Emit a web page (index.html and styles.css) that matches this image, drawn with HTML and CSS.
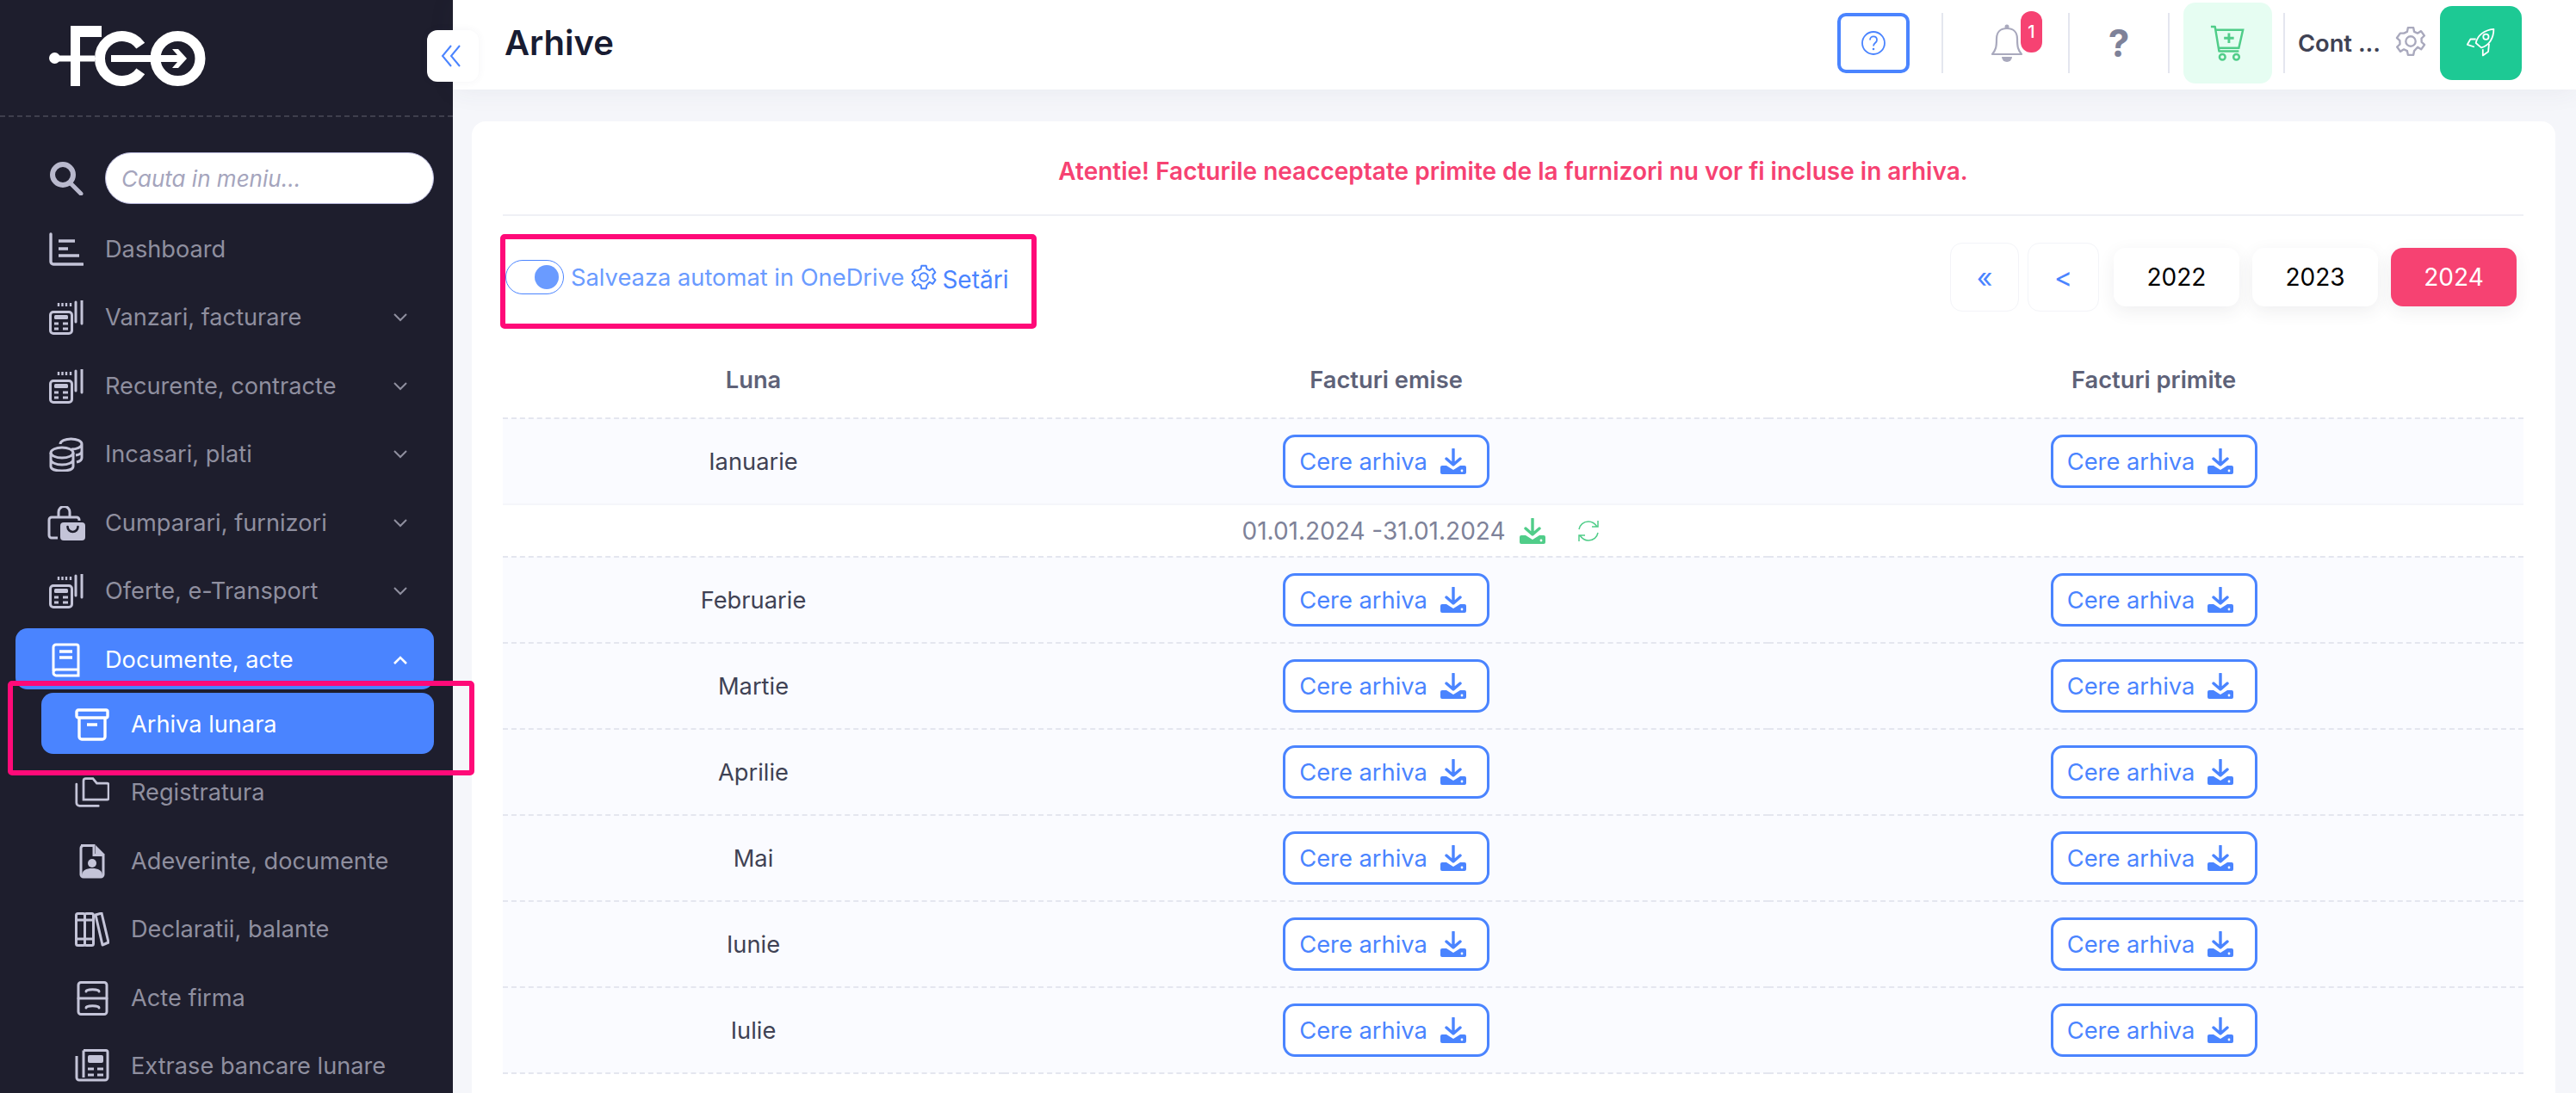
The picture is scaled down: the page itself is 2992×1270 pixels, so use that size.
FILE: index.html
```html
<!DOCTYPE html>
<html lang="ro">
<head>
<meta charset="utf-8">
<title>Arhive</title>
<link rel="stylesheet" href="styles.css">
</head>
<body>
<svg class="defs" width="0" height="0" aria-hidden="true">
  <symbol id="i-calc" viewBox="0 0 40 40">
    <rect x="1.5" y="13.5" width="25" height="25" rx="3.5" fill="none" stroke="currentColor" stroke-width="3"/>
    <rect x="6" y="17" width="16" height="5" rx="1.5" fill="currentColor"/>
    <path d="M6 27h5M16 27h6M6 33h5M16 33h6" stroke="currentColor" stroke-width="3"/>
    <path d="M11 3v4M15.5 3v4M20 3v4M25 3v4" stroke="currentColor" stroke-width="2.4"/>
    <path d="M31 2v23M38 0v27" stroke="currentColor" stroke-width="3" stroke-linecap="round"/>
  </symbol>
  <symbol id="i-down" viewBox="0 0 30 30">
    <path d="M15 1v17M7 12l8 7 8-7" fill="none" stroke="currentColor" stroke-width="3.4" stroke-linecap="round" stroke-linejoin="round"/>
    <path d="M2 20h5l8 5 8-5h5a2 2 0 0 1 2 2v6a2 2 0 0 1-2 2H2a2 2 0 0 1-2-2v-6a2 2 0 0 1 2-2z" fill="currentColor"/>
    <circle cx="25" cy="26" r="1.4" fill="#fff"/>
  </symbol>
  <symbol id="i-gear" viewBox="0 0 24 24">
    <circle cx="12" cy="12" r="3.6" fill="none" stroke="currentColor" stroke-width="1.5"/>
    <path d="M10 2h4l.6 3 2.4 1.1 2.6-1.6 2.4 3.4-2.1 2 .1 2.6 2.1 2-2.4 3.4-2.6-1.6L14.6 19 14 22h-4l-.6-3-2.4-1.1-2.6 1.6-2.4-3.4 2.1-2-.1-2.6-2.1-2 2.4-3.4L7 6.1 9.4 5z" fill="none" stroke="currentColor" stroke-width="1.5" stroke-linejoin="round"/>
  </symbol>
</svg>

<div class="app">
  <aside class="sidebar">
    <div class="brand">
      <svg class="logo" viewBox="0 0 182 70" aria-label="FGO">
        <path d="M25 0h36v13H36v57H25z" fill="#fff"/>
        <path d="M106.300 23.100A26 26 0 1 0 106.300 52.900" fill="none" stroke="#fff" stroke-width="12"/>
        <circle cx="149.500" cy="38" r="26" fill="none" stroke="#fff" stroke-width="12"/>
        <circle cx="6.500" cy="37.500" r="6.500" fill="#fff"/>
        <path d="M7 34.500h46v7H7z" fill="#fff"/>
        <path d="M72 34h77l-6-7h7l10 11-10 11h-7l6-7H72z" fill="#fff"/>
      </svg>
    </div>
    <div class="search">
      <svg class="nav-icon" viewBox="0 0 40 40"><circle cx="16" cy="16" r="12" fill="none" stroke="currentColor" stroke-width="6"/><path d="M25 26l12 12" stroke="currentColor" stroke-width="5" stroke-linecap="round"/></svg>
      <input class="search-input" type="text" placeholder="Cauta in meniu...">
    </div>
    <nav class="nav">
      <a class="nav-item">
        <svg class="nav-icon" viewBox="0 0 40 40"><path d="M2 2v32a3 3 0 0 0 3 3h34" fill="none" stroke="currentColor" stroke-width="3.400" stroke-linecap="round"/><path d="M11 10h19M11 19h11M11 27h24" stroke="currentColor" stroke-width="3.400"/></svg>
        <span class="nav-label">Dashboard</span>
      </a>
      <a class="nav-item">
        <svg class="nav-icon"><use href="#i-calc"/></svg>
        <span class="nav-label">Vanzari, facturare</span>
        <svg class="chev" viewBox="0 0 16 10"><path d="M1 1l7 7 7-7" fill="none" stroke="currentColor" stroke-width="2"/></svg>
      </a>
      <a class="nav-item">
        <svg class="nav-icon"><use href="#i-calc"/></svg>
        <span class="nav-label">Recurente, contracte</span>
        <svg class="chev" viewBox="0 0 16 10"><path d="M1 1l7 7 7-7" fill="none" stroke="currentColor" stroke-width="2"/></svg>
      </a>
      <a class="nav-item">
        <svg class="nav-icon" viewBox="0 0 40 40" fill="none" stroke="currentColor" stroke-width="3"><ellipse cx="15" cy="18" rx="13" ry="6"/><path d="M2 18v16c0 3.300 5.800 5 13 5s13-1.700 13-5V18M2 26c0 3.300 5.800 6 13 6s13-2.700 13-6"/><path d="M13 8c0-3.500 5.800-6 12.500-6S38 4.500 38 8v16c0 2-2 4-6 5M26 14c6 0 12-2.500 12-6M31 21c4-.7 7-2.500 7-5"/></svg>
        <span class="nav-label">Incasari, plati</span>
        <svg class="chev" viewBox="0 0 16 10"><path d="M1 1l7 7 7-7" fill="none" stroke="currentColor" stroke-width="2"/></svg>
      </a>
      <a class="nav-item">
        <svg class="nav-icon icon-wide" viewBox="0 0 44 40"><path d="M13 13V7a6.500 6.500 0 0 1 13 0v6" fill="none" stroke="currentColor" stroke-width="3"/><path d="M12 37H5a3 3 0 0 1-3-3V16a3 3 0 0 1 3-3h29a3 3 0 0 1 3 3v1" fill="none" stroke="currentColor" stroke-width="3"/><rect x="15" y="19" width="29" height="21" rx="4" fill="currentColor"/><path d="M23.500 24a6 6 0 0 0 12 0" fill="none" stroke="#1e1e2d" stroke-width="2.600" stroke-linecap="round"/></svg>
        <span class="nav-label">Cumparari, furnizori</span>
        <svg class="chev" viewBox="0 0 16 10"><path d="M1 1l7 7 7-7" fill="none" stroke="currentColor" stroke-width="2"/></svg>
      </a>
      <a class="nav-item">
        <svg class="nav-icon"><use href="#i-calc"/></svg>
        <span class="nav-label">Oferte, e-Transport</span>
        <svg class="chev" viewBox="0 0 16 10"><path d="M1 1l7 7 7-7" fill="none" stroke="currentColor" stroke-width="2"/></svg>
      </a>
      <a class="nav-item is-active">
        <svg class="nav-icon" viewBox="0 0 40 40" fill="none" stroke="currentColor" stroke-width="3"><path d="M5 33V5a3 3 0 0 1 3-3h24a2 2 0 0 1 2 2v27H8a3.500 3.500 0 0 0-3 3.500A3.500 3.500 0 0 0 8 38h26v-7"/><path d="M12 10h15M12 17h15" stroke-width="3.400"/></svg>
        <span class="nav-label">Documente, acte</span>
        <svg class="chev" viewBox="0 0 16 10"><path d="M1 9l7-7 7 7" fill="none" stroke="currentColor" stroke-width="2.600"/></svg>
      </a>
      <div class="subnav">
        <a class="nav-item sub is-active">
          <svg class="nav-icon" viewBox="0 0 40 40" fill="none" stroke="currentColor" stroke-width="3.400"><rect x="2" y="3" width="36" height="9" rx="2"/><path d="M5 12v22a3 3 0 0 0 3 3h24a3 3 0 0 0 3-3V12M14 20h12"/></svg>
          <span class="nav-label">Arhiva lunara</span>
        </a>
        <a class="nav-item sub">
          <svg class="nav-icon" viewBox="0 0 44 40" fill="none" stroke="currentColor" stroke-width="3"><path d="M11 29V5a3 3 0 0 1 3-3h9l5 6h13a2 2 0 0 1 2 2v17a2 2 0 0 1-2 2z"/><path d="M2 9v24a4 4 0 0 0 4 4h24" stroke-linecap="round"/></svg>
          <span class="nav-label">Registratura</span>
        </a>
        <a class="nav-item sub">
          <svg class="nav-icon" viewBox="0 0 40 40"><path d="M7 1.500h15v11h11V35a3 3 0 0 1-3 3H10a3 3 0 0 1-3-3V4.500a3 3 0 0 1 3-3z" fill="none" stroke="currentColor" stroke-width="3"/><path d="M24 1l10 10H24z" fill="currentColor"/><circle cx="20" cy="22" r="5" fill="currentColor"/><path d="M8 37c0-7 5-9 12-9s12 2 12 9z" fill="currentColor"/></svg>
          <span class="nav-label">Adeverinte, documente</span>
        </a>
        <a class="nav-item sub">
          <svg class="nav-icon" viewBox="0 0 40 40" fill="none" stroke="currentColor" stroke-width="3"><rect x="1.500" y="1.500" width="10" height="37" rx="2"/><rect x="11.500" y="1.500" width="10" height="37" rx="2"/><path d="M2 9h19M2 31h19"/><path d="M24 3l7-2 8 34-7 3z" stroke-linejoin="round"/></svg>
          <span class="nav-label">Declaratii, balante</span>
        </a>
        <a class="nav-item sub">
          <svg class="nav-icon" viewBox="0 0 40 40" fill="none" stroke="currentColor" stroke-width="3"><rect x="4" y="1.500" width="33" height="37" rx="3"/><path d="M4 20h33M13 12c0-3 15-3 15 0M13 31c0-3 15-3 15 0" stroke-linecap="round"/></svg>
          <span class="nav-label">Acte firma</span>
        </a>
        <a class="nav-item sub">
          <svg class="nav-icon" viewBox="0 0 40 40" fill="none" stroke="currentColor" stroke-width="3"><path d="M10 1.500h26a2 2 0 0 1 2 2V33a3 3 0 0 1-3 3H5a3 3 0 0 1-3-3V8"/><path d="M10 1.500V33"/><rect x="15" y="7" width="18" height="9" rx="2" fill="currentColor" stroke="none"/><path d="M15 23h7M26 23h7M15 30h7M26 30h7"/></svg>
          <span class="nav-label">Extrase bancare lunare</span>
        </a>
      </div>
    </nav>
  </aside>

  <main class="main">
    <header class="topbar">
      <h1 class="title">Arhive</h1>
      <div class="tools">
        <button class="help-btn" type="button">
          <svg viewBox="0 0 30 30" class="help-icon"><circle cx="15" cy="15" r="13" fill="none" stroke="currentColor" stroke-width="1.800"/><path d="M11 11.500c0-5.500 8-5.500 8 0 0 3.500-4 3-4 7" fill="none" stroke="currentColor" stroke-width="1.800"/><circle cx="15" cy="22" r="1.300" fill="currentColor"/></svg>
        </button>
        <span class="sep sep-1"></span>
        <span class="bell">
          <svg viewBox="0 0 38 46" class="bell-icon"><path d="M2 36c4-5 5-8 5-18C7 10 12 6 19 6s12 4 12 12c0 10 1 13 5 18z" fill="none" stroke="#a9a9bd" stroke-width="2.200" stroke-linejoin="round"/><circle cx="19" cy="4" r="2.500" fill="#a9a9bd"/><path d="M13 39h12a6 6 0 0 1-12 0z" fill="#a9a9bd"/></svg>
          <span class="badge">1</span>
        </span>
        <span class="sep"></span>
        <span class="question">?</span>
        <span class="sep"></span>
        <span class="cart">
          <svg viewBox="0 0 44 44" class="cart-icon" fill="none" stroke="#50cd89" stroke-width="2.600"><path d="M2 2h5l5 30h24" stroke-linejoin="round"/><path d="M8 6h33l-5 22H12"/><circle cx="16" cy="39" r="3.500"/><circle cx="33" cy="39" r="3.500"/><path d="M24 10v12M18 16h12" stroke-width="3"/></svg>
        </span>
        <span class="sep sep-4"></span>
        <span class="account">Cont ...</span>
        <svg class="acc-gear"><use href="#i-gear"/></svg>
        <button class="rocket" type="button">
          <svg viewBox="0 0 40 40" class="rocket-icon" fill="none" stroke="#fff" stroke-width="2" stroke-linejoin="round"><path d="M13 20C15 10 24 3 36 2c0 12-6 21-16 24z"/><circle cx="26" cy="12" r="3.500"/><path d="M13 15H6l-4 7 9 3M22 28v8l7-5 1-10"/></svg>
        </button>
      </div>
    </header>

    <section class="card">
      <p class="notice">Atentie! Facturile neacceptate primite de la furnizori nu vor fi incluse in arhiva.</p>
      <div class="toolbar">
        <div class="auto-save">
          <span class="switch"><span class="knob"></span></span>
          <span class="auto-label">Salveaza automat in OneDrive</span>
          <svg class="set-gear"><use href="#i-gear"/></svg>
          <span class="set-label">Setări</span>
        </div>
        <div class="pager">
          <a class="page-arrow first">«</a>
          <a class="page-arrow prev">&lt;</a>
          <a class="page-year">2022</a>
          <a class="page-year">2023</a>
          <a class="page-year is-current">2024</a>
        </div>
      </div>
      <table class="archive">
        <thead>
          <tr><th class="c-month">Luna</th><th class="c-out">Facturi emise</th><th class="c-in">Facturi primite</th></tr>
        </thead>
        <tbody>
          <tr class="month"><td>Ianuarie</td>
            <td><a class="req">Cere arhiva <svg class="req-icon"><use href="#i-down"/></svg></a></td>
            <td class="c-in"><a class="req">Cere arhiva <svg class="req-icon"><use href="#i-down"/></svg></a></td></tr>
          <tr class="range"><td colspan="3"><div class="range-inner"><span>01.01.2024 -31.01.2024</span>
            <svg class="range-down"><use href="#i-down"/></svg>
            <svg class="range-sync" viewBox="0 0 26 26" fill="none" stroke="#50cd89" stroke-width="1.500"><path d="M2 11C3 6 7 2 13 2c5 0 8 3 10 6M24 1v7h-7M24 15c-1 5-5 9-11 9-5 0-8-3-10-6M2 25v-7h7"/></svg></div></td></tr>
          <tr class="month"><td>Februarie</td>
            <td><a class="req">Cere arhiva <svg class="req-icon"><use href="#i-down"/></svg></a></td>
            <td class="c-in"><a class="req">Cere arhiva <svg class="req-icon"><use href="#i-down"/></svg></a></td></tr>
          <tr class="month"><td>Martie</td>
            <td><a class="req">Cere arhiva <svg class="req-icon"><use href="#i-down"/></svg></a></td>
            <td class="c-in"><a class="req">Cere arhiva <svg class="req-icon"><use href="#i-down"/></svg></a></td></tr>
          <tr class="month"><td>Aprilie</td>
            <td><a class="req">Cere arhiva <svg class="req-icon"><use href="#i-down"/></svg></a></td>
            <td class="c-in"><a class="req">Cere arhiva <svg class="req-icon"><use href="#i-down"/></svg></a></td></tr>
          <tr class="month"><td>Mai</td>
            <td><a class="req">Cere arhiva <svg class="req-icon"><use href="#i-down"/></svg></a></td>
            <td class="c-in"><a class="req">Cere arhiva <svg class="req-icon"><use href="#i-down"/></svg></a></td></tr>
          <tr class="month"><td>Iunie</td>
            <td><a class="req">Cere arhiva <svg class="req-icon"><use href="#i-down"/></svg></a></td>
            <td class="c-in"><a class="req">Cere arhiva <svg class="req-icon"><use href="#i-down"/></svg></a></td></tr>
          <tr class="month"><td>Iulie</td>
            <td><a class="req">Cere arhiva <svg class="req-icon"><use href="#i-down"/></svg></a></td>
            <td class="c-in"><a class="req">Cere arhiva <svg class="req-icon"><use href="#i-down"/></svg></a></td></tr>
        </tbody>
      </table>
    </section>
  </main>
</div>

<button class="collapse" type="button" aria-label="Restrange meniul">
  <svg viewBox="0 0 24 28" fill="none" stroke="#4a84ff" stroke-width="2"><path d="M12 2L2 14l10 12M22 2L12 14l10 12"/></svg>
</button>
<div class="mark mark-menu"></div>
<div class="mark mark-toggle"></div>
</body>
</html>
```

FILE: styles.css
```css
* { box-sizing: border-box; }
html, body { margin: 0; height: 1270px; overflow: hidden; }
body { position: relative; font-family: Inter, "Liberation Sans", sans-serif; background: #f5f6fa; color: #3f4254; }
.defs { position: absolute; }
svg { display: block; flex: none; }

.app { display: flex; height: 1270px; }

/* Sidebar */
.sidebar { width: 526px; flex: none; background: #1e1e2d; overflow: hidden; }
.brand { height: 136px; padding: 30px 0 0 57px; background: repeating-linear-gradient(90deg, #3f3f4d 0 6px, transparent 6px 10px) left bottom / 100% 2px no-repeat; }
.logo { width: 182px; height: 70px; }
.search { display: flex; align-items: center; gap: 25px; margin: 41px 22px 0 57px; color: #b9b9cd; }
.search .nav-icon { height: 40px; }
.search-input { flex: 1; min-width: 0; height: 60px; padding: 0 18px; border: 1px solid #b9b9dc; border-radius: 30px; background: #fff; font: italic 400 26px Inter, sans-serif; outline: none; }
.search-input::placeholder { color: #a5a5bd; opacity: 1; }
.nav { display: flex; flex-direction: column; gap: 8.5px; margin: 16px 22px 0 18px; }
.subnav { display: flex; flex-direction: column; gap: 8.5px; margin-top: -4.5px; }
.nav-item { display: flex; align-items: center; flex: none; height: 71px; padding: 2px 31px 0 39px; gap: 25px; border-radius: 14px; color: #8f8f9f; }
.nav-item .nav-icon { color: #c4c4d8; }
.nav-item.sub { margin-left: 30px; }
.nav-icon { width: 40px; height: 40px; flex: none; }
.icon-wide { width: 44px; margin: 0 -2px; }
.nav-label { flex: 1; font-size: 27.2px; line-height: 32px; white-space: nowrap; }
.chev { width: 16px; height: 10px; }
.nav-item.is-active { background: #4a84ff; color: #fff; }
.nav-item.is-active .nav-icon { color: #fff; }

/* Header */
.main { flex: 1; min-width: 0; display: flex; flex-direction: column; }
.topbar { display: flex; align-items: center; justify-content: space-between; height: 104px; flex: none; padding: 0 63px 4px 60px; background: #fff; box-shadow: 0 0 30px rgba(60, 65, 100, .07); }
.title { margin: 0; font-size: 40px; line-height: 48px; font-weight: 600; color: #181c32; }
.tools { display: flex; align-items: center; height: 100px; }
.help-btn { display: flex; align-items: center; justify-content: center; width: 84px; height: 70px; padding: 0; border: 4px solid #4a84ff; border-radius: 10px; background: #fff; color: #4a84ff; }
.help-icon { width: 30px; height: 30px; }
.sep { width: 2px; height: 70px; background: #e4e6ef; flex: none; }
.sep-1 { margin-left: 37px; }
.bell { position: relative; width: 145px; height: 70px; }
.bell-icon { position: absolute; left: 55px; top: 12px; width: 38px; height: 46px; }
.badge { position: absolute; left: 90px; top: -2px; width: 25px; height: 48px; border-radius: 12px; background: #f64272; color: #fff; font-size: 20px; font-weight: 500; line-height: 48px; text-align: center; }
.question { width: 114px; text-align: center; font-size: 44px; line-height: 44px; font-weight: 700; color: #7e8299; }
.cart { display: flex; align-items: center; justify-content: center; width: 103px; height: 94px; margin-left: 16px; border-radius: 14px; background: #e6fdf2; }
.cart-icon { width: 42px; height: 42px; }
.sep-4 { margin-left: 13px; }
.account { margin-left: 15px; font-size: 27.3px; font-weight: 600; color: #3f4254; white-space: nowrap; }
.acc-gear { width: 38px; height: 38px; margin: -4px 0 0 16px; color: #a9a9bd; }
.rocket { display: flex; align-items: center; justify-content: center; width: 95px; height: 86px; margin-left: 15px; padding: 0; border: 0; border-radius: 14px; background: #1dc994; }
.rocket-icon { width: 36px; height: 36px; }

/* Card */
.card { flex: 1; margin: 37px 24px 0 22px; padding: 0 37px 0 36px; background: #fff; border-radius: 16px 16px 0 0; }
.notice { display: flex; align-items: center; justify-content: center; height: 110px; margin: 0; padding-top: 7px; border-bottom: 2px solid #eff0f5; color: #f64272; font-size: 28px; font-weight: 600; }
.toolbar { display: flex; align-items: center; justify-content: space-between; height: 147px; padding: 0 8px 5px 3px; }
.auto-save { display: flex; align-items: center; }
.switch { position: relative; width: 68px; height: 40px; border: 1px solid #4a84ff; border-radius: 20px; background: #fff; flex: none; }
.knob { position: absolute; right: 5px; top: 5px; width: 28px; height: 28px; border-radius: 50%; background: #6a9bff; }
.auto-label { margin-left: 8px; font-size: 27.3px; color: #6a9bff; white-space: nowrap; }
.set-gear { width: 32px; height: 32px; margin-left: 7px; color: #4a84ff; }
.set-label { margin-left: 5px; margin-top: 5px; font-size: 28px; color: #4a84ff; }
.pager { display: flex; align-items: center; }
.pager a { display: flex; align-items: center; justify-content: center; border-radius: 14px; }
.page-arrow { height: 80px; border: 1px solid #f3f4f8; color: #4a84ff; font-size: 32px; }
.first { width: 80px; }
.prev { width: 83px; margin: 0 17px 0 10px; }
.page-year { width: 146px; height: 68px; margin-left: 15px; background: #fff; color: #000; font-size: 28px; box-shadow: 0 6px 20px rgba(50, 50, 70, .08); }
.prev + .page-year { margin-left: 0; }
.page-year.is-current { background: #f64272; color: #fff; }

.archive { width: 100%; table-layout: fixed; border-collapse: collapse; font-size: 27.3px; text-align: center; }
.archive th { height: 88px; padding: 0; color: #5e6278; font-size: 27.3px; font-weight: 600; border-bottom: 2px dashed #e4e6ef; }
.c-month { width: 582px; }
.c-out { width: 888px; }
.c-in { padding-left: 18px !important; }
.month td { height: 100px; padding: 0; background: #fafbff; border-bottom: 2px dashed #e4e6ef; color: #3f4254; }
.month:first-child td { border-bottom: 2px solid #f5f6fa; }
.range td { height: 61px; padding: 0 215px 0 0; border-bottom: 2px dashed #e4e6ef; color: #7e8299; font-size: 28px; }
.range-inner { display: flex; align-items: center; justify-content: center; }
.range-down { width: 30px; height: 30px; margin-left: 16px; color: #50cd89; }
.range-sync { width: 26px; height: 26px; margin-left: 37px; }
.req { display: inline-flex; align-items: center; justify-content: center; gap: 15px; width: 240px; height: 62px; padding-right: 8px; border: 3px solid #4a84ff; border-radius: 14px; background: #fff; color: #4a84ff; font-size: 27.3px; vertical-align: middle; }
.req-icon { width: 30px; height: 30px; }

/* Overlays */
.collapse { position: absolute; left: 496px; top: 35px; width: 60px; height: 60px; padding: 0 0 0 16px; border: 0; border-radius: 12px; background: #fff; box-shadow: 0 0 10px rgba(60, 65, 100, .06); }
.collapse svg { width: 24px; height: 28px; }
.mark { position: absolute; border: 6px solid #ff0a78; border-radius: 5px; }
.mark-menu { left: 9px; top: 791px; width: 542px; height: 110px; }
.mark-toggle { left: 581px; top: 272px; width: 623px; height: 110px; }
```
